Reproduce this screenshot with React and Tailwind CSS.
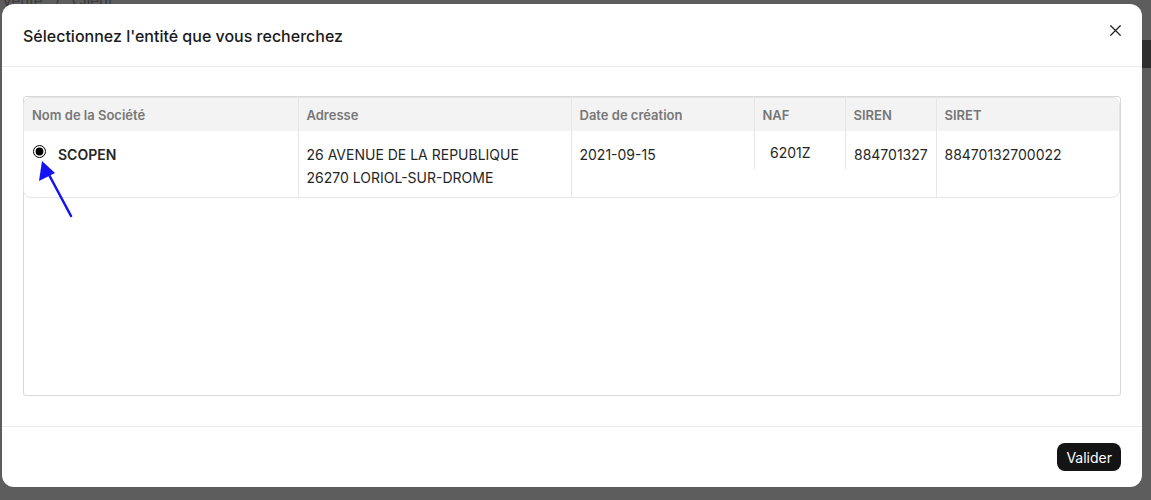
import React, { useState } from 'react';
import { X } from 'lucide-react';

const ROWS = [
  { id: 1, name: 'SCOPEN', address: ['26 AVENUE DE LA REPUBLIQUE', '26270 LORIOL-SUR-DROME'], created: '2021-09-15', naf: '6201Z', siren: '884701327', siret: '88470132700022' },
];

export default function App() {
  const [selected, setSelected] = useState(1);

  return (
    <div className="relative w-[1151px] h-[500px] overflow-hidden bg-[#5d5d5d] font-['Inter','Liberation_Sans',sans-serif]">
      {/* page behind the overlay */}
      <div className="flex items-center h-[14px] text-[15px] text-[#3a3a3a] -mt-[6px]">
        <span className="ml-[2px]">Vente</span>
        <span className="mx-3">/</span>
        <span>Client</span>
        <span className="ml-[620px]">⌕ Recherche globale (Ctrl + G)</span>
        <span className="ml-[160px]">Aidez-moi</span>
      </div>
      <div className="absolute right-0 top-[40px] w-[9px] h-[28px] bg-[#2f2f2f]" />

      {/* modal */}
      <div className="absolute left-[2px] top-[4px] w-[1140px] h-[483px] bg-white rounded-xl flex flex-col">
        <div className="flex items-center justify-between h-[63px] px-[21px] border-b border-[#ebebeb]">
          <h2 className="text-[16px] font-medium text-[#1a1a1a] pt-[2px]">Sélectionnez l'entité que vous recherchez</h2>
          <button className="text-[#222] -mr-[4px] -mt-[10px]"><X size={19} strokeWidth={1.5} /></button>
        </div>

        <div className="px-[21px] pt-[29px] pb-[30px]">
          <div className="relative h-[300px] border border-[#d9d9d9] rounded-[3px]">
            <div className="w-[1097px] border border-[#e4e4e4] rounded-lg overflow-hidden -ml-px">
              <table className="w-full table-fixed border-collapse text-left">
                <colgroup>
                  <col className="w-[274px]" />
                  <col className="w-[273px]" />
                  <col className="w-[183px]" />
                  <col className="w-[91px]" />
                  <col className="w-[91px]" />
                  <col />
                </colgroup>
                <thead className="bg-[#f3f3f3] text-[13px] font-semibold text-[#777]">
                  <tr className="h-[33px]">
                    <th className="px-[8px] pt-[2px] font-semibold">Nom de la Société</th>
                    <th className="px-[8px] pt-[2px] font-semibold border-l border-[#e6e6e6]">Adresse</th>
                    <th className="px-[8px] pt-[2px] font-semibold border-l border-[#e6e6e6]">Date de création</th>
                    <th className="px-[8px] pt-[2px] font-semibold border-l border-[#e6e6e6]">NAF</th>
                    <th className="px-[8px] pt-[2px] font-semibold border-l border-[#e6e6e6]">SIREN</th>
                    <th className="px-[8px] pt-[2px] font-semibold border-l border-[#e6e6e6]">SIRET</th>
                  </tr>
                </thead>
                <tbody className="text-[14px] text-[#262626]">
                  {ROWS.map(r => (
                    <tr key={r.id} className="align-top h-[66px]">
                      <td className="px-[9px] pt-[13px]">
                        <label className="flex items-center gap-[12px]">
                          <input type="radio" checked={selected === r.id} onChange={() => setSelected(r.id)} className="w-[13px] h-[13px] -mt-[6px] accent-black" />
                          <span className="font-semibold">{r.name}</span>
                        </label>
                      </td>
                      <td className="px-[8px] pt-[12px] leading-[23px] border-l border-[#e6e6e6]">
                        {r.address.map(l => <div key={l}>{l}</div>)}
                      </td>
                      <td className="px-[8px] pt-[12px] leading-[23px] border-l border-[#e6e6e6]">{r.created}</td>
                      <td className="p-0">
                        <div className="h-[38px] pl-[15px] pt-[10px] leading-[23px] border-l border-[#e6e6e6]">{r.naf}</div>
                      </td>
                      <td className="p-0">
                        <div className="h-[38px] pl-[8px] pt-[12px] leading-[23px] border-l border-[#e6e6e6]">{r.siren}</div>
                      </td>
                      <td className="px-[8px] pt-[12px] leading-[23px] border-l border-[#e6e6e6]">{r.siret}</td>
                    </tr>
                  ))}
                </tbody>
              </table>
            </div>

            {/* annotation arrow */}
            <svg className="absolute left-[12px] top-[64px]" width="40" height="60" viewBox="0 0 40 60">
              <line x1="35" y1="55" x2="11" y2="10" stroke="#1414f0" strokeWidth="2.5" strokeLinecap="round" />
              <polygon points="6,0 3,20 19,12" fill="#1414f0" />
            </svg>
          </div>
        </div>

        <div className="mt-auto h-[61px] border-t border-[#ebebeb] flex items-center justify-end px-[21px]">
          <button className="h-[28px] px-[9px] rounded-lg bg-[#141414] text-white text-[14px]">Valider</button>
        </div>
      </div>
    </div>
  );
}
